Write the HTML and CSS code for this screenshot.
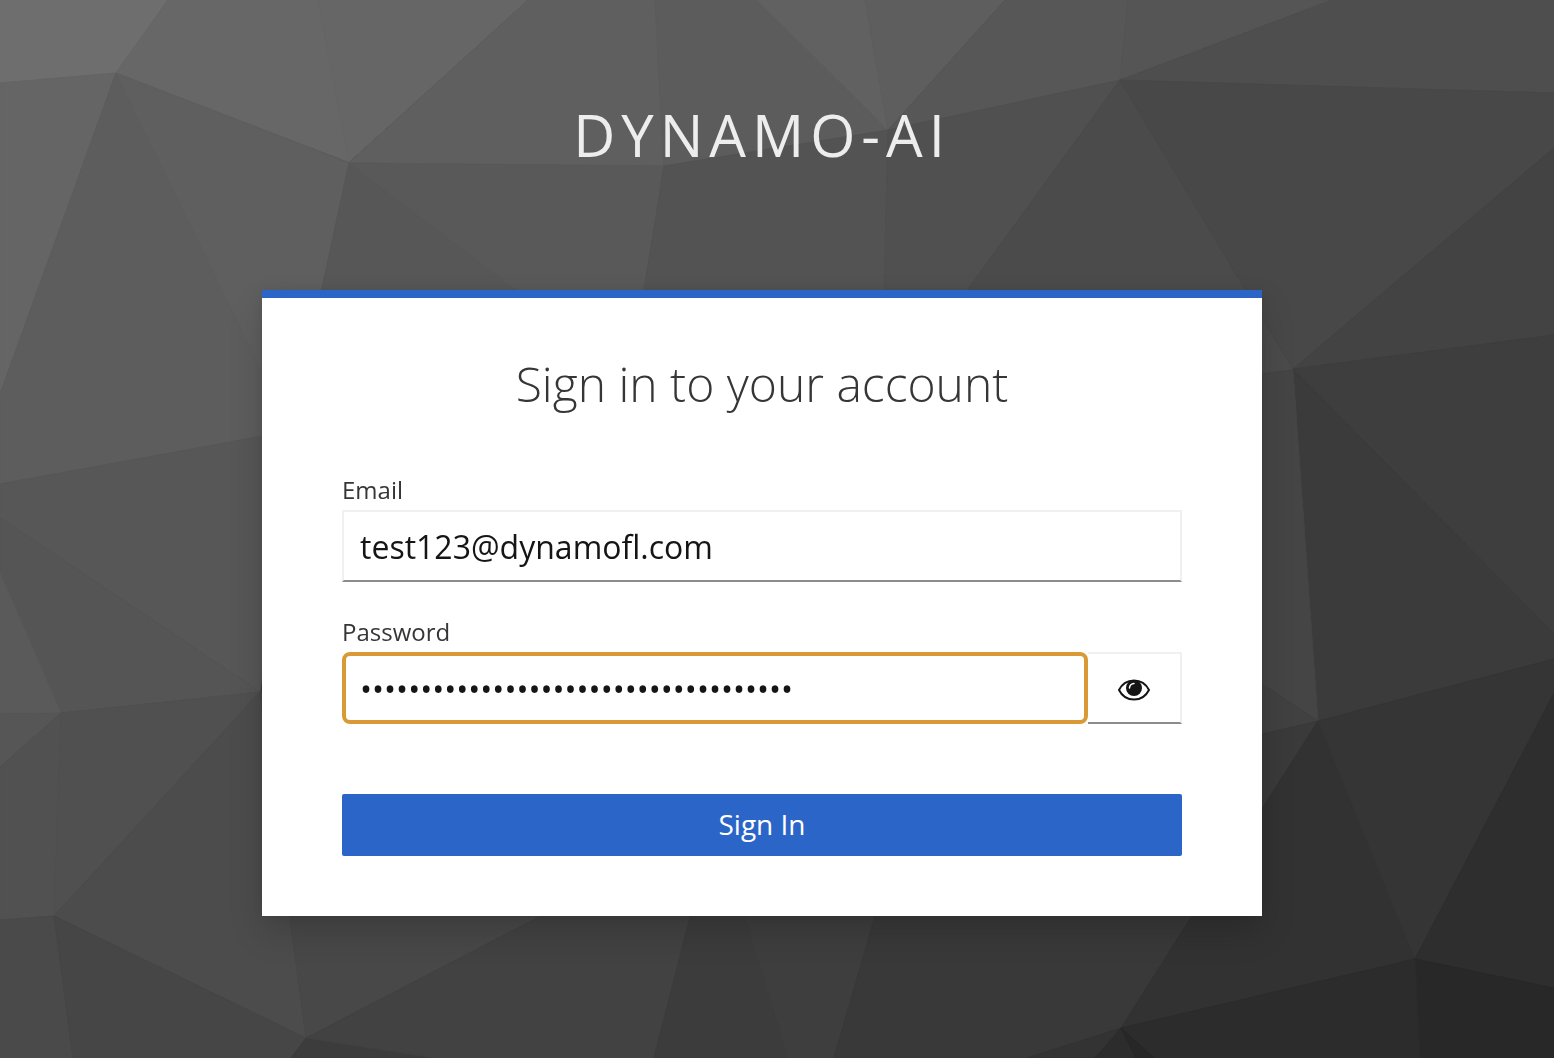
FILE: index.html
```html
<!DOCTYPE html>
<html lang="en">
<head>
<meta charset="utf-8">
<meta name="viewport" content="width=device-width, initial-scale=1">
<title>Sign in to Dynamo-AI</title>
<link rel="stylesheet" href="styles.css">
</head>
<body>
<svg class="backdrop" viewBox="0 0 1554 1058" preserveAspectRatio="xMidYMid slice" aria-hidden="true">
  <!-- top edge -->
  <path fill="#6e6e6e" stroke="#6e6e6e" d="M0 0H168L116 73 0 83z"/>
  <path fill="#676767" stroke="#676767" d="M168 0H318L349 162 116 73z"/>
  <path fill="#666666" stroke="#666666" d="M318 0H528L349 162z"/>
  <path fill="#5f5f5f" stroke="#5f5f5f" d="M528 0H655L664 166 349 163z"/>
  <path fill="#5c5c5c" stroke="#5c5c5c" d="M655 0H757L888 130 664 166z"/>
  <path fill="#616161" stroke="#616161" d="M757 0H865L888 130z"/>
  <path fill="#5e5e5e" stroke="#5e5e5e" d="M865 0H1005L888 130z"/>
  <path fill="#575757" stroke="#575757" d="M1005 0H1128L1120 80 888 130z"/>
  <path fill="#555555" stroke="#555555" d="M1128 0H1332L1120 80z"/>
  <path fill="#4e4e4e" stroke="#4e4e4e" d="M1332 0H1554V93L1120 80z"/>
  <!-- middle band -->
  <path fill="#656565" stroke="#656565" d="M0 83L116 73 0 394z"/>
  <path fill="#5d5d5d" stroke="#5d5d5d" d="M116 73L291 431 0 484V394z"/>
  <path fill="#5f5f5f" stroke="#5f5f5f" d="M116 73L349 163 291 431z"/>
  <path fill="#575757" stroke="#575757" d="M349 163L630 377 291 431z"/>
  <path fill="#595959" stroke="#595959" d="M349 163L664 166 630 377z"/>
  <path fill="#535353" stroke="#535353" d="M664 166L888 130 882 377H630z"/>
  <path fill="#505050" stroke="#505050" d="M888 130L1120 80 904 377H882z"/>
  <path fill="#4b4b4b" stroke="#4b4b4b" d="M1120 80L1293 370 1262 373 904 377z"/>
  <path fill="#484848" stroke="#484848" d="M1120 80L1554 93V148L1293 369z"/>
  <path fill="#434343" stroke="#434343" d="M1554 148V335L1293 369z"/>
  <path fill="#3e3e3e" stroke="#3e3e3e" d="M1554 335V634L1293 369z"/>
  <path fill="#3b3b3b" stroke="#3b3b3b" d="M1293 369L1554 634V659L1318 721z"/>
  <path fill="#454545" stroke="#454545" d="M1293 370L1318 721 1262 684V374z"/>
  <path fill="#414141" stroke="#414141" d="M1318 721L1262 734V684z"/>
  <path fill="#3a3a3a" stroke="#3a3a3a" d="M1318 721L1262 809V734z"/>
  <path fill="#575757" stroke="#575757" d="M0 484L291 431 260 692 0 518z"/>
  <path fill="#555555" stroke="#555555" d="M0 518L260 692 61 713 0 573z"/>
  <path fill="#5a5a5a" stroke="#5a5a5a" d="M0 573L61 713 0 714z"/>
  <path fill="#565656" stroke="#565656" d="M0 714L61 713 0 767z"/>
  <!-- bottom edge -->
  <path fill="#515151" stroke="#515151" d="M0 767L61 713 54 916 0 920z"/>
  <path fill="#505050" stroke="#505050" d="M61 713L260 692 54 916z"/>
  <path fill="#4c4c4c" stroke="#4c4c4c" d="M260 692L306 1038 54 916z"/>
  <path fill="#4a4a4a" stroke="#4a4a4a" d="M0 920L54 916 73 1058H0z"/>
  <path fill="#464646" stroke="#464646" d="M54 916L306 1038 291 1058H73z"/>
  <path fill="#484848" stroke="#484848" d="M260 692L606 882 306 1038z"/>
  <path fill="#3c3c3c" stroke="#3c3c3c" d="M306 1038L434 1058H291z"/>
  <path fill="#424242" stroke="#424242" d="M306 1038L606 882H699L654 1058H434z"/>
  <path fill="#3c3c3c" stroke="#3c3c3c" d="M699 882H734L788 1058H654z"/>
  <path fill="#3e3e3e" stroke="#3e3e3e" d="M734 882H885L834 1058H788z"/>
  <path fill="#393939" stroke="#393939" d="M885 882H1213L1121 1028 1027 1058H834z"/>
  <path fill="#323232" stroke="#323232" d="M1262 809L1318 721 1415 959 1121 1028 1192 916z"/>
  <path fill="#353535" stroke="#353535" d="M1318 721L1554 659V693L1415 959z"/>
  <path fill="#2e2e2e" stroke="#2e2e2e" d="M1554 693V988L1415 959z"/>
  <path fill="#282828" stroke="#282828" d="M1415 959L1554 988V1058H1420z"/>
  <path fill="#2c2c2c" stroke="#2c2c2c" d="M1121 1028L1415 959 1420 1058H1154z"/>
  <path fill="#333333" stroke="#333333" d="M1121 1028L1095 1058H1027z"/>
  <path fill="#2c2c2c" stroke="#2c2c2c" d="M1121 1028L1136 1058H1095z"/>
  <path fill="#272727" stroke="#272727" d="M1121 1028L1154 1058H1136z"/>
</svg>

<div class="page">
  <header class="brand">Dynamo-AI</header>
  <main class="card">
    <h1 class="card-title">Sign in to your account</h1>
    <form class="form" onsubmit="return false">
      <div class="field">
        <label class="label" for="email">Email</label>
        <input class="control" id="email" type="text" value="test123@dynamofl.com" autocomplete="off" spellcheck="false">
      </div>
      <div class="field">
        <label class="label" for="password">Password</label>
        <div class="input-group">
          <input class="control control-active" id="password" type="password" value="aaaaaaaaaaaaaaaaaaaaaaaaaaaaaaaaaaaa" autocomplete="off">
          <button class="reveal" type="button" aria-label="Show password">
            <svg class="reveal-icon" viewBox="0 0 32 22" aria-hidden="true">
              <path fill="none" stroke="currentColor" stroke-width="2" d="M1 11C4 5 9.500 1.500 16 1.500S28 5 31 11C28 17 22.500 20.500 16 20.500S4 17 1 11z"/>
              <circle cx="16" cy="9" r="8" fill="currentColor"/>
              <path fill="none" stroke="#fff" stroke-width="1.500" stroke-linecap="round" d="M11.500 9A4.500 4.500 0 0 1 16 4.500"/>
            </svg>
          </button>
        </div>
      </div>
      <button class="submit" type="submit">Sign In</button>
    </form>
  </main>
</div>
</body>
</html>
```
FILE: styles.css
```css
* {
  box-sizing: border-box;
}

body {
  margin: 0;
  min-height: 100vh;
  background: #3c3c3c;
  color: #363636;
  font-family: "Open Sans", "Noto Sans", sans-serif;
}

.backdrop {
  position: fixed;
  inset: 0;
  z-index: -1;
  width: 100%;
  height: 100%;
}

.page {
  display: flex;
  flex-direction: column;
  align-items: center;
  padding: 95px 30px 60px 0;
}

.brand {
  margin-bottom: 115px;
  color: #ededed;
  font-size: 58px;
  line-height: 80px;
  letter-spacing: 6px;
  text-transform: uppercase;
}

.card {
  width: 100%;
  max-width: 1000px;
  padding: 54px 80px 60px;
  border-top: 8px solid #2b65c8;
  background: #fff;
  box-shadow: 0 16px 32px rgba(3, 3, 3, 0.16), 0 0 12px rgba(3, 3, 3, 0.08);
}

.card-title {
  margin: 0 0 54px;
  font-size: 48px;
  font-weight: 300;
  line-height: 64px;
  text-align: center;
}

.form {
  display: flex;
  flex-direction: column;
  gap: 30px;
}

.field {
  display: flex;
  flex-direction: column;
}

.label {
  font-size: 24px;
  line-height: 40px;
}

.control {
  width: 100%;
  min-width: 0;
  height: 72px;
  margin: 0;
  padding: 0 16px;
  border: 2px solid #f0f0f0;
  border-bottom-color: #8a8d90;
  border-radius: 0;
  outline: none;
  background: #fff;
  color: #151515;
  font: 32px/44px "Open Sans", "Noto Sans", sans-serif;
}

.control-active {
  flex: 1;
  padding: 0 14px;
  border: 4px solid #d99a36;
  border-radius: 8px;
}

.input-group {
  display: flex;
}

.reveal {
  display: flex;
  align-items: center;
  justify-content: center;
  width: 94px;
  height: 72px;
  padding: 3px 0 0;
  border: 2px solid #f0f0f0;
  border-left: 0;
  border-bottom-color: #8a8d90;
  background: #fff;
  color: #151515;
}

.reveal-icon {
  width: 32px;
  height: 22px;
}

.submit {
  height: 62px;
  margin-top: 40px;
  padding: 0 0 2px;
  border: 0;
  border-radius: 2px;
  background: #2b65c8;
  color: #fff;
  font: 28px/40px "Open Sans", "Noto Sans", sans-serif;
}
```
